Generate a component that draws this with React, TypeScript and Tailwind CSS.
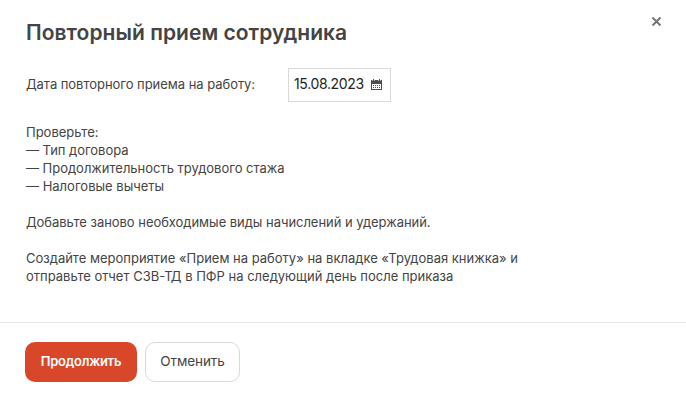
function CalendarIcon() {
  return (
    <svg width="11" height="11" viewBox="0 0 11 11" shapeRendering="crispEdges">
      <path fill="#4d4d4d" d="M2 0h1v1H2zM8 0h1v1H8zM0 1h11v10H0z" />
      <path fill="#b5b5b5" d="M1 1h1v1H1zM3 1h1v1H3zM7 1h1v1H7zM9 1h1v1H9z" />
      <path fill="#fff" d="M1 5h9v5H1z" />
      <path fill="#4d4d4d" d="M2 6h1v1H2zM4 6h1v1H4zM6 6h1v1H6zM8 6h1v1H8zM2 8h1v1H2zM4 8h1v1H4zM6 8h1v1H6zM8 8h1v1H8z" />
    </svg>
  );
}

export default function App() {
  return (
    <main className="flex h-[402px] w-[686px] flex-col bg-white font-['Inter',sans-serif] text-[13px] leading-[18px] text-[#444]">
      <header className="flex h-[68px] items-start justify-between pr-[24px] pl-[26px]">
        <h1 className="mt-[19px] text-[21px] leading-7 font-semibold tracking-[0.04px] whitespace-nowrap">Повторный прием сотрудника</h1>
        <button aria-label="Закрыть" className="mt-[17px]">
          <svg className="block" width="11" height="9" viewBox="0 0 11 9" fill="none" stroke="#747474" strokeWidth="2"><path d="M1.5 .5l8 8M9.5 .5l-8 8" /></svg>
        </button>
      </header>
      <section className="flex h-[254px] flex-col px-[26px]">
        <div className="flex h-[34px] items-center">
          <label className="w-[262px] pb-[2px] tracking-[-0.04px] whitespace-nowrap">Дата повторного приема на работу:</label>
          <div className="flex h-[34px] w-[103px] items-center justify-between border border-[#d9d9d9] pr-[8px] pb-px pl-[5px] text-[14px] tracking-[-0.35px] text-[#222]">
            <span className="pb-px">15.08.2023</span>
            <CalendarIcon />
          </div>
        </div>
        <div className="mt-[21px] whitespace-nowrap">
          <p>Проверьте:</p>
          <p className="tracking-[-0.04px]">— Тип договора</p>
          <p className="tracking-[-0.02px]">— Продолжительность трудового стажа</p>
          <p>— Налоговые вычеты</p>
          <p className="mt-[18px] tracking-[-0.04px]">Добавьте заново необходимые виды начислений и удержаний.</p>
          <p className="mt-[18px]">Создайте мероприятие «Прием на работу» на вкладке «Трудовая книжка» и</p>
          <p>отправьте отчет СЗВ-ТД в ПФР на следующий день после приказа</p>
        </div>
      </section>
      <footer className="flex h-[80px] gap-2 border-t border-[#e5e5e5] pt-[19px] pl-[25px]">
        <button className="h-10 w-[112px] rounded-[10px] bg-[#d9472b] pb-[2px] text-[13px] font-semibold tracking-[-0.25px] text-white">Продолжить</button>
        <button className="h-10 w-[95px] rounded-[10px] border border-[#d9d9d9] pb-[2px] text-[13.5px] tracking-[-0.1px]">Отменить</button>
      </footer>
    </main>
  );
}
